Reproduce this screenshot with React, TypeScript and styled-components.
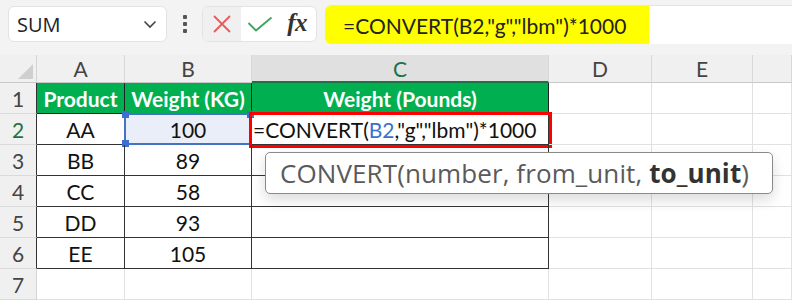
import React from 'react';
import styled, { createGlobalStyle, css } from 'styled-components';

const GlobalStyle = createGlobalStyle`
  body {
    margin: 0;
    background: #ffffff;
    font-family: 'Lato', 'Liberation Sans', sans-serif;
  }
`;

const Page = styled.div`
  width: 792px;
  height: 301px;
  overflow: hidden;
  background: #ffffff;
`;

/* ---------- formula toolbar ---------- */

const Toolbar = styled.div`
  display: flex;
  align-items: flex-start;
  height: 55px;
  padding: 6px 0 0 8px;
  box-sizing: border-box;
  background: #f3f3f3;
`;

const NameBox = styled.div`
  display: flex;
  align-items: center;
  justify-content: space-between;
  width: 159px;
  height: 36px;
  box-sizing: border-box;
  padding: 0 9px 0 8px;
  background: #ffffff;
  border: 1px solid #e3e3e3;
  border-radius: 6px;
  font-family: 'Open Sans', 'Liberation Sans', sans-serif;
  font-size: 20px;
  color: #222;
`;

const Dots = styled.div`
  display: flex;
  flex-direction: column;
  align-items: center;
  justify-content: center;
  gap: 3px;
  width: 35px;
  height: 36px;

  span {
    width: 4px;
    height: 4px;
    border-radius: 1px;
    background: #555;
  }
`;

const ActionGroup = styled.div`
  display: flex;
  width: 115px;
  height: 36px;
  box-sizing: border-box;
  background: #ffffff;
  border: 1px solid #e3e3e3;
  border-radius: 6px;
  overflow: hidden;
`;

const ActionButton = styled.div<{ $active?: boolean }>`
  display: flex;
  align-items: center;
  justify-content: center;
  width: 38px;
  height: 100%;
  background: ${({ $active }) => ($active ? '#f0f0f0' : 'transparent')};
`;

const FxLabel = styled.span`
  font-family: 'Liberation Serif', 'DejaVu Serif', serif;
  font-style: italic;
  font-weight: bold;
  font-size: 25px;
  line-height: 1;
  color: #333;
  letter-spacing: -0.5px;
  margin-top: -3px;
`;

const FormulaBar = styled.div`
  display: flex;
  flex: 1;
  height: 38px;
  margin: -1px 0 0 8px;
  background: #ffffff;
  border-top: 1px solid #e3e3e3;
  border-radius: 6px 0 0 6px;
  overflow: hidden;
`;

const FormulaHighlight = styled.div`
  display: flex;
  align-items: center;
  width: 324px;
  padding-left: 18px;
  box-sizing: border-box;
  background: #ffff00;
  font-family: 'Lato', 'Liberation Sans', sans-serif;
  font-size: 21px;
  color: #222;
`;

/* ---------- sheet ---------- */

const Sheet = styled.div`
  position: relative;
  display: grid;
  grid-template-columns: 37px 88px 127px 297px 103px 101px 1fr;
  grid-template-rows: 28px repeat(7, 31px);
`;

const Corner = styled.div`
  position: relative;
  background: #f0f0f0;
  border-right: 1px solid #d4d4d4;
  border-bottom: 1px solid #c8c8c8;

  &::after {
    content: '';
    position: absolute;
    right: 3px;
    bottom: 3px;
    width: 15px;
    height: 15px;
    background: #cfcfcf;
    clip-path: polygon(100% 0, 100% 100%, 0 100%);
  }
`;

const ColHeader = styled.div<{ $selected?: boolean }>`
  display: flex;
  align-items: center;
  justify-content: center;
  background: ${({ $selected }) => ($selected ? '#e0e0e0' : '#f0f0f0')};
  border-right: 1px solid #d9d9d9;
  border-bottom: ${({ $selected }) => ($selected ? '2px solid #1e7145' : '1px solid #c8c8c8')};
  box-sizing: border-box;
  font-size: 21px;
  color: ${({ $selected }) => ($selected ? '#1e7145' : '#444')};
`;

const RowHeader = styled.div<{ $selected?: boolean; $dark?: boolean }>`
  display: flex;
  align-items: center;
  justify-content: center;
  background: #f0f0f0;
  border-right: 1px solid ${({ $dark }) => ($dark ? '#333' : '#d4d4d4')};
  border-bottom: 1px solid #dadada;
  box-sizing: border-box;
  font-size: 21px;
  color: ${({ $selected }) => ($selected ? '#1e7145' : '#444')};
`;

type CellKind = 'head' | 'data' | 'empty';

const Cell = styled.div<{ $kind: CellKind; $selected?: boolean; $align?: 'left' | 'center' }>`
  position: relative;
  display: flex;
  align-items: center;
  justify-content: ${({ $align }) => ($align === 'left' ? 'flex-start' : 'center')};
  box-sizing: border-box;
  font-size: 21px;
  color: #111;
  white-space: nowrap;
  border-right: 1px solid #e1e1e1;
  border-bottom: 1px solid #e1e1e1;

  ${({ $kind }) =>
    $kind === 'head' &&
    css`
      background: #00b050;
      color: #ffffff;
      font-weight: bold;
      border-right-color: #222;
      border-bottom-color: #222;
    `}

  ${({ $kind }) =>
    $kind === 'data' &&
    css`
      border-right-color: #333;
      border-bottom-color: #333;
    `}

  ${({ $selected }) =>
    $selected &&
    css`
      background: #e9eef8;
    `}
`;

const SelectionFrame = styled.div`
  position: absolute;
  left: -1px;
  top: -1px;
  right: -1px;
  bottom: -1px;
  border: 2px solid #4472c4;
  pointer-events: none;
`;

const Handle = styled.span<{ $pos: 'tl' | 'bl' | 'tr' }>`
  position: absolute;
  width: 7px;
  height: 7px;
  background: #3b6fd0;
  ${({ $pos }) => ($pos === 'tl' ? 'left: -4px; top: -4px;' : '')}
  ${({ $pos }) => ($pos === 'bl' ? 'left: -4px; bottom: -4px;' : '')}
  ${({ $pos }) => ($pos === 'tr' ? 'right: -4px; top: -4px;' : '')}
`;

const EditFrame = styled.div`
  position: absolute;
  left: -3px;
  top: -2px;
  right: -4px;
  bottom: -4px;
  border: 3px solid #ff0000;
  pointer-events: none;
`;

const EditText = styled.span`
  padding-left: 1px;
`;

const Ref = styled.span`
  color: #3b6fd0;
`;

const Tooltip = styled.div`
  position: absolute;
  left: 265px;
  top: 97px;
  width: 508px;
  height: 42px;
  box-sizing: border-box;
  display: flex;
  align-items: center;
  padding-left: 14px;
  background: #ffffff;
  border: 1px solid #8a8a8a;
  border-radius: 5px;
  box-shadow: 0 6px 14px rgba(0, 0, 0, 0.14);
  font-family: 'Open Sans', 'Liberation Sans', sans-serif;
  font-size: 26px;
  letter-spacing: 0.1px;
  color: #5a5a5a;
  white-space: nowrap;

  b {
    color: #333;
    font-weight: bold;
  }
`;

const columns = ['A', 'B', 'C', 'D', 'E', ''];

const rows = [
  ['AA', '100'],
  ['BB', '89'],
  ['CC', '58'],
  ['DD', '93'],
  ['EE', '105'],
];

const Chevron = () => (
  <svg width="14" height="9" viewBox="0 0 14 9">
    <path d="M1.5 1.5 L7 7 L12.5 1.5" fill="none" stroke="#444" strokeWidth="1.6" />
  </svg>
);

const CancelIcon = () => (
  <svg width="20" height="20" viewBox="0 0 20 20">
    <path d="M2 2 L18 18 M18 2 L2 18" stroke="#e85a5a" strokeWidth="1.8" />
  </svg>
);

const EnterIcon = () => (
  <svg width="26" height="16" viewBox="0 0 26 16">
    <path d="M1.5 7 L9 14.5 L24.5 1.5" fill="none" stroke="#3aa55a" strokeWidth="1.8" />
  </svg>
);

const App: React.FC = () => {
  return (
    <Page>
      <GlobalStyle />
      <Toolbar>
        <NameBox>
          SUM
          <Chevron />
        </NameBox>
        <Dots>
          <span />
          <span />
          <span />
        </Dots>
        <ActionGroup>
          <ActionButton $active>
            <CancelIcon />
          </ActionButton>
          <ActionButton>
            <EnterIcon />
          </ActionButton>
          <ActionButton>
            <FxLabel>fx</FxLabel>
          </ActionButton>
        </ActionGroup>
        <FormulaBar>
          <FormulaHighlight>=CONVERT(B2,"g","lbm")*1000</FormulaHighlight>
        </FormulaBar>
      </Toolbar>

      <Sheet>
        <Corner />
        {columns.map((c, i) => (
          <ColHeader key={i} $selected={c === 'C'}>
            {c}
          </ColHeader>
        ))}

        <RowHeader $dark>1</RowHeader>
        <Cell $kind="head">Product</Cell>
        <Cell $kind="head">Weight (KG)</Cell>
        <Cell $kind="head">Weight (Pounds)</Cell>
        <Cell $kind="empty" />
        <Cell $kind="empty" />
        <Cell $kind="empty" />

        {rows.map(([name, kg], i) => {
          const rowNo = i + 2;
          const isActive = rowNo === 2;
          return (
            <React.Fragment key={name}>
              <RowHeader $dark $selected={isActive}>
                {rowNo}
              </RowHeader>
              <Cell $kind="data">{name}</Cell>
              <Cell $kind="data" $selected={isActive}>
                {kg}
                {isActive && (
                  <SelectionFrame>
                    <Handle $pos="tl" />
                    <Handle $pos="bl" />
                    <Handle $pos="tr" />
                  </SelectionFrame>
                )}
              </Cell>
              <Cell $kind="data" $align="left">
                {isActive && (
                  <>
                    <EditText>
                      =CONVERT(<Ref>B2</Ref>,"g","lbm")*1000
                    </EditText>
                    <EditFrame />
                  </>
                )}
              </Cell>
              <Cell $kind="empty" />
              <Cell $kind="empty" />
              <Cell $kind="empty" />
            </React.Fragment>
          );
        })}

        <RowHeader>7</RowHeader>
        {columns.map((_, i) => (
          <Cell key={i} $kind="empty" />
        ))}

        <Tooltip>
          CONVERT(number, from_unit,&nbsp;<b>to_unit</b>)
        </Tooltip>
      </Sheet>
    </Page>
  );
};

export default App;
